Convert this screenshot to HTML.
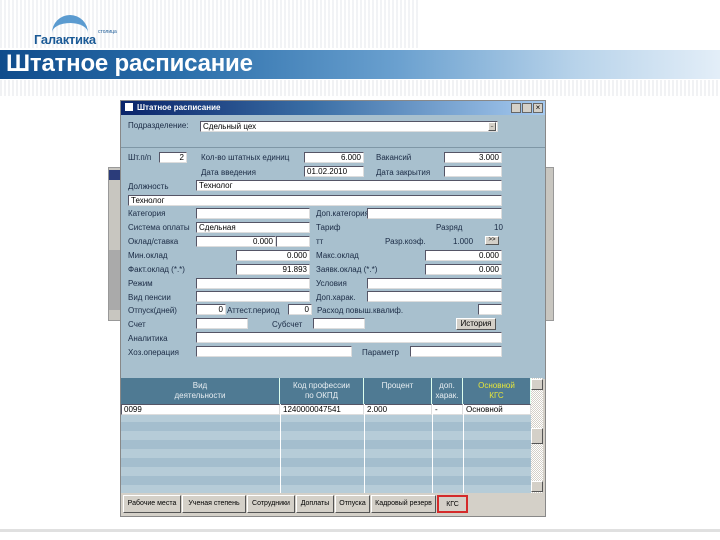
<!DOCTYPE html><html><head><meta charset="utf-8"><style>
*{margin:0;padding:0;box-sizing:border-box}
body{width:720px;height:540px;position:relative;overflow:hidden;background:#fff;font-family:"Liberation Sans","Noto Sans CJK SC",sans-serif}
.a{position:absolute}
.l{position:absolute;font-size:8px;color:#1a2a44;white-space:nowrap;line-height:10px}
.f{position:absolute;background:#fff;border:1px solid #556;border-right-color:#ddd;border-bottom-color:#ddd;font-size:8px;line-height:9px;color:#000;padding-left:2px;white-space:nowrap;overflow:hidden;height:11px}
.r{text-align:right;padding-right:2px}
.b{position:absolute;width:8px;height:9px;background:#d4d0c8;border:1px solid #fff;border-right-color:#555;border-bottom-color:#555;font-size:6px;line-height:6px;text-align:center}
.t{position:absolute;top:495px;height:18px;background:#d4d0c8;border:1px solid #fff;border-right-color:#555;border-bottom-color:#555;font-size:7px;line-height:16px;text-align:center;color:#000;white-space:nowrap;overflow:hidden}
.h{position:absolute;top:378px;height:26px;background:#4f7a93;color:#e8eef2;font-size:8px;text-align:center;line-height:10px;padding-top:3px;border-right:1px solid #dfe;}
</style></head><body>
<div class="a" style="left:0;top:0;width:420px;height:48px;background:repeating-linear-gradient(90deg,#eef0f3 0 2px,#fff 2px 4px);opacity:.8"></div>
<div class="a" style="left:0;top:80px;width:720px;height:16px;background:repeating-linear-gradient(90deg,#f1f2f4 0 2px,#fff 2px 4px)"></div>
<div class="a" style="left:52px;top:15px;width:36px;height:18px;border-top:8px solid #5b9bd0;border-radius:30px 30px 0 0;"></div>
<div class="a" style="left:34px;top:32px;font-size:13px;font-weight:bold;color:#1b5a96;letter-spacing:-0.3px">Галактика</div>
<div class="a" style="left:98px;top:29px;font-size:5px;color:#1b5a96">столица</div>
<div class="a" style="left:0;top:50px;width:720px;height:29px;background:linear-gradient(90deg,#104c8c 0%,#2a6eaa 25%,#6aa0cf 55%,#b8d3ea 80%,#e3eef8 100%)"></div>
<div class="a" style="left:6px;top:50px;font-size:24px;font-weight:bold;color:#fff;letter-spacing:-0.2px">Штатное расписание</div>
<div class="a" style="left:108px;top:167px;width:446px;height:154px;background:#c8c6c0;border:1px solid #999"></div>
<div class="a" style="left:109px;top:170px;width:12px;height:10px;background:#2b3c7a"></div>
<div class="a" style="left:109px;top:250px;width:12px;height:60px;background:#aaa"></div>
<div class="a" style="left:120px;top:100px;width:426px;height:417px;background:#d4d0c8;border:1px solid #888"></div>
<div class="a" style="left:121px;top:101px;width:424px;height:14px;background:linear-gradient(90deg,#0a246a,#3a6ea5 45%,#a6caf0)"></div>
<div class="a" style="left:125px;top:103px;width:8px;height:8px;background:#fff"></div>
<div class="a" style="left:137px;top:103px;font-size:8px;font-weight:bold;color:#fff">Штатное расписание</div>
<div class="a" style="left:511px;top:103px;width:10px;height:10px;background:#d4d0c8;border:1px solid #666"></div>
<div class="a" style="left:522px;top:103px;width:10px;height:10px;background:#d4d0c8;border:1px solid #666"></div>
<div class="a" style="left:533px;top:103px;width:10px;height:10px;background:#d4d0c8;border:1px solid #666;font-size:8px;line-height:8px;text-align:center">×</div>
<div class="a" style="left:121px;top:115px;width:424px;height:264px;background:#a8c0ce"></div>
<div class="a" style="left:121px;top:147px;width:424px;height:1px;background:#7f97a6"></div>
<div class="l" style="left:128px;top:121px">Подразделение:</div><div class="f" style="left:200px;top:121px;width:298px">Сдельный цех</div><div class="b" style="left:488px;top:122px">..</div>
<div class="l" style="left:128px;top:153px">Шт.п/п</div><div class="f r" style="left:159px;top:152px;width:28px">2</div>
<div class="l" style="left:201px;top:153px">Кол-во штатных единиц</div><div class="f r" style="left:304px;top:152px;width:60px">6.000</div>
<div class="l" style="left:376px;top:153px">Вакансий</div><div class="f r" style="left:444px;top:152px;width:58px">3.000</div>
<div class="l" style="left:201px;top:168px">Дата введения</div><div class="f" style="left:304px;top:166px;width:60px">01.02.2010</div>
<div class="l" style="left:376px;top:168px">Дата закрытия</div><div class="f" style="left:444px;top:166px;width:58px"></div>
<div class="l" style="left:128px;top:182px">Должность</div><div class="f" style="left:196px;top:180px;width:306px">Технолог</div>
<div class="f" style="left:128px;top:195px;width:374px">Технолог</div>
<div class="l" style="left:128px;top:209px">Категория</div><div class="f" style="left:196px;top:208px;width:114px"></div>
<div class="l" style="left:316px;top:209px">Доп.категория</div><div class="f" style="left:367px;top:208px;width:135px"></div>
<div class="l" style="left:128px;top:223px">Система оплаты</div><div class="f" style="left:196px;top:222px;width:114px">Сдельная</div>
<div class="l" style="left:316px;top:223px">Тариф</div><div class="l" style="left:436px;top:223px">Разряд</div><div class="l" style="left:494px;top:223px">10</div>
<div class="l" style="left:128px;top:237px">Оклад/ставка</div><div class="f r" style="left:196px;top:236px;width:80px">0.000</div><div class="f" style="left:276px;top:236px;width:34px"></div>
<div class="l" style="left:316px;top:237px">тт</div><div class="l" style="left:385px;top:237px">Разр.коэф.</div><div class="l" style="left:453px;top:237px">1.000</div><div class="b" style="left:485px;top:236px;width:14px">&gt;&gt;</div>
<div class="l" style="left:128px;top:251px">Мин.оклад</div><div class="f r" style="left:236px;top:250px;width:74px">0.000</div>
<div class="l" style="left:316px;top:251px">Макс.оклад</div><div class="f r" style="left:425px;top:250px;width:77px">0.000</div>
<div class="l" style="left:128px;top:265px">Факт.оклад (*.*)</div><div class="f r" style="left:236px;top:264px;width:74px">91.893</div>
<div class="l" style="left:316px;top:265px">Заявк.оклад (*.*)</div><div class="f r" style="left:425px;top:264px;width:77px">0.000</div>
<div class="l" style="left:128px;top:279px">Режим</div><div class="f" style="left:196px;top:278px;width:114px"></div>
<div class="l" style="left:316px;top:279px">Условия</div><div class="f" style="left:367px;top:278px;width:135px"></div>
<div class="l" style="left:128px;top:293px">Вид пенсии</div><div class="f" style="left:196px;top:291px;width:114px"></div>
<div class="l" style="left:316px;top:293px">Доп.харак.</div><div class="f" style="left:367px;top:291px;width:135px"></div>
<div class="l" style="left:128px;top:306px">Отпуск(дней)</div><div class="f r" style="left:196px;top:304px;width:30px">0</div>
<div class="l" style="left:227px;top:306px">Аттест.период</div><div class="f r" style="left:288px;top:304px;width:24px">0</div>
<div class="l" style="left:317px;top:306px">Расход повыш.квалиф.</div><div class="f" style="left:478px;top:304px;width:24px"></div>
<div class="l" style="left:128px;top:320px">Счет</div><div class="f" style="left:196px;top:318px;width:52px"></div>
<div class="l" style="left:272px;top:320px">Субсчет</div><div class="f" style="left:313px;top:318px;width:52px"></div>
<div class="b" style="left:456px;top:318px;width:40px;height:12px;font-size:8px;line-height:10px">История</div>
<div class="l" style="left:128px;top:334px">Аналитика</div><div class="f" style="left:196px;top:332px;width:306px"></div>
<div class="l" style="left:128px;top:348px">Хоз.операция</div><div class="f" style="left:196px;top:346px;width:156px"></div>
<div class="l" style="left:362px;top:348px">Параметр</div><div class="f" style="left:410px;top:346px;width:92px"></div>
<div class="a" style="left:121px;top:404px;width:410px;height:89px;background:repeating-linear-gradient(180deg,#a4bece 0 9px,#b6ccd8 9px 18px)"></div>
<div class="h" style="left:121px;width:159px">Вид<br>деятельности</div>
<div class="h" style="left:280px;width:84px">Код профессии<br>по ОКПД</div>
<div class="h" style="left:364px;width:68px">Процент</div>
<div class="h" style="left:432px;width:31px">доп.<br>харак.</div>
<div class="h" style="left:463px;width:68px;color:#e6e63a">Основной<br>КГС</div>
<div class="f" style="left:121px;top:404px;width:159px">0099</div>
<div class="f" style="left:280px;top:404px;width:84px">1240000047541</div>
<div class="f" style="left:364px;top:404px;width:68px">2.000</div>
<div class="f" style="left:432px;top:404px;width:31px">-</div>
<div class="f" style="left:463px;top:404px;width:68px">Основной</div>
<div class="a" style="left:280px;top:404px;width:1px;height:89px;background:#fff"></div>
<div class="a" style="left:364px;top:404px;width:1px;height:89px;background:#fff"></div>
<div class="a" style="left:432px;top:404px;width:1px;height:89px;background:#fff"></div>
<div class="a" style="left:463px;top:404px;width:1px;height:89px;background:#fff"></div>
<div class="a" style="left:531px;top:378px;width:12px;height:115px;background:repeating-conic-gradient(#d4d0c8 0 25%,#fff 0 50%) 0 0/2px 2px"></div>
<div class="b" style="left:531px;top:379px;width:12px;height:11px"></div>
<div class="b" style="left:531px;top:428px;width:12px;height:16px"></div>
<div class="b" style="left:531px;top:481px;width:12px;height:11px"></div>
<div class="t" style="left:123px;width:58px">Рабочие места</div>
<div class="t" style="left:182px;width:64px">Ученая степень</div>
<div class="t" style="left:247px;width:48px">Сотрудники</div>
<div class="t" style="left:296px;width:38px">Доплаты</div>
<div class="t" style="left:335px;width:35px">Отпуска</div>
<div class="t" style="left:371px;width:65px">Кадровый резерв</div>
<div class="t" style="left:437px;width:31px;border:2px solid #d42a2a">КГС</div>
<div class="a" style="left:0;top:529px;width:720px;height:3px;background:#e0e0e0"></div>
</body></html>
